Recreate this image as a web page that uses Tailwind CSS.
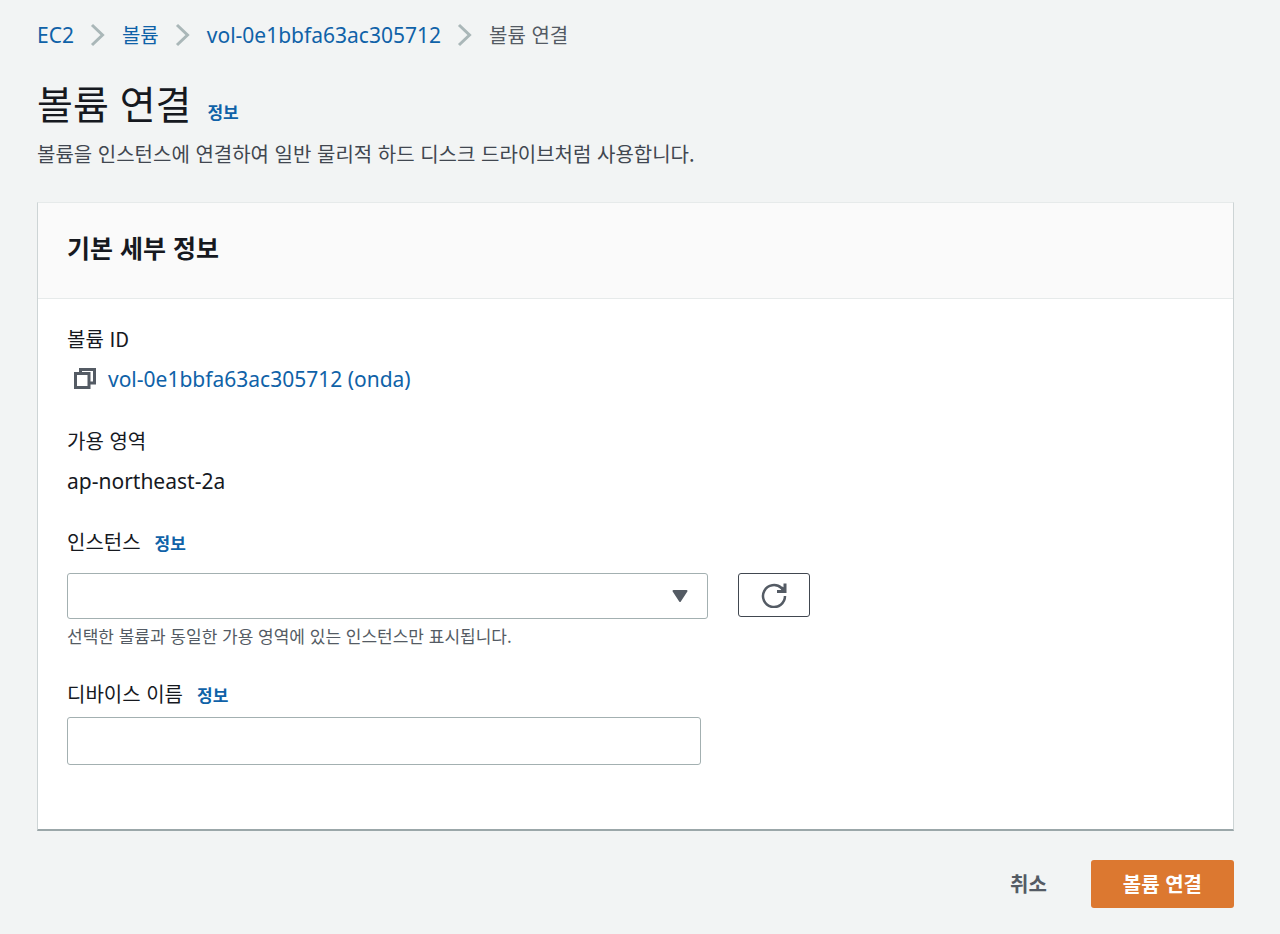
<!DOCTYPE html>
<html lang="ko">
<head>
<meta charset="utf-8">
<meta name="viewport" content="width=device-width, initial-scale=1">
<title>볼륨 연결</title>
<script src="https://cdn.jsdelivr.net/npm/@tailwindcss/browser@4"></script>
</head>
<body class="min-h-screen bg-[#f2f4f4] pt-5 pr-[46px] pb-6 pl-[37px] font-['Noto_Sans_CJK_KR',sans-serif] text-xl/[30px] text-[#16191f]">
  <nav aria-label="탐색 경로">
    <ol class="flex items-center text-[#0f62a8]">
      <li class="font-['Noto_Sans',sans-serif] text-[21px]/[30px]"><a href="#">EC2</a></li>
      <li aria-hidden="true" class="mx-4"><svg class="h-6 w-4" viewBox="0 0 16 24" fill="none" stroke="#aab7b8" stroke-width="3"><path d="M2 2l10.500 10L2 22"/></svg></li>
      <li><a href="#">볼륨</a></li>
      <li aria-hidden="true" class="mx-4"><svg class="h-6 w-4" viewBox="0 0 16 24" fill="none" stroke="#aab7b8" stroke-width="3"><path d="M2 2l10.500 10L2 22"/></svg></li>
      <li class="font-['Noto_Sans',sans-serif] text-[21px]/[30px]"><a href="#">vol-0e1bbfa63ac305712</a></li>
      <li aria-hidden="true" class="mx-4"><svg class="h-6 w-4" viewBox="0 0 16 24" fill="none" stroke="#aab7b8" stroke-width="3"><path d="M2 2l10.500 10L2 22"/></svg></li>
      <li aria-current="page" class="text-[#545b64]">볼륨 연결</li>
    </ol>
  </nav>

  <header class="mt-[22px]">
    <div class="flex items-baseline gap-4">
      <h1 class="text-[39px]/[60px]">볼륨 연결</h1>
      <a href="#" class="text-[17px]/[26px] font-bold text-[#0f62a8]">정보</a>
    </div>
    <p class="mt-[7px] text-[#414750]">볼륨을 인스턴스에 연결하여 일반 물리적 하드 디스크 드라이브처럼 사용합니다.</p>
  </header>

  <main>
    <form>
      <section class="mt-[33px] border-x border-t border-b-2 border-x-[#cdd4d5] border-t-[#e6eaea] border-b-[#9ba7a9] bg-white">
        <div class="border-b border-[#e6eaea] bg-[#fafafa] px-[29px] pt-[25px] pb-[31px]">
          <h2 class="text-[25px]/[39px] font-bold">기본 세부 정보</h2>
        </div>
        <div class="px-[29px] pt-[25px] pb-16">
          <dl>
            <dt>볼륨 ID</dt>
            <dd class="mt-[10px] flex items-center gap-3 pl-[7px] font-['Noto_Sans',sans-serif] text-[21px]/[30px]">
              <button type="button" aria-label="볼륨 ID 복사"><svg class="block h-[22px] w-[22px]" viewBox="0 0 22 22" fill="none" stroke="#545b64" stroke-width="3"><path d="M1.500 5.500h13.500v14H1.500zM6.500 5.500V1.500h14V15H15"/></svg></button>
              <a href="#" class="text-[#0f62a8]">vol-0e1bbfa63ac305712 (onda)</a>
            </dd>
            <dt class="mt-8">가용 영역</dt>
            <dd class="mt-[10px] font-['Noto_Sans',sans-serif] text-[21px]/[30px]">ap-northeast-2a</dd>
          </dl>

          <div class="mt-[31px] flex items-baseline gap-[14px]">
            <label for="instance">인스턴스</label>
            <a href="#" class="text-[17px]/[26px] font-bold text-[#0f62a8]">정보</a>
          </div>
          <div class="mt-4 flex items-start gap-[30px]">
            <div class="relative w-full max-w-[641px]">
              <select id="instance" aria-describedby="instance-hint" class="block h-[46px] w-full appearance-none rounded-[3px] border border-[#a3b0b1] bg-white px-4"><option value=""></option></select>
              <svg class="pointer-events-none absolute top-4 right-5 h-[14px] w-4" viewBox="0 0 16 14" fill="#545b64" stroke="#545b64" stroke-width="2" stroke-linejoin="round"><path d="M1.500 2h13L8 12z"/></svg>
            </div>
            <button type="button" aria-label="새로 고침" class="flex h-11 w-[72px] shrink-0 items-center justify-center rounded-[3px] border border-[#414750] bg-white">
              <svg class="h-[26px] w-[26px]" viewBox="0 0 26 26" fill="none" stroke="#545b64" stroke-width="2.500"><path d="M24 14A11 11 0 1 1 20.500 6L22 7.500"/><path d="M24 1.500v8h-8M20.500 5.500L24 9.500" stroke-width="3"/></svg>
            </button>
          </div>
          <p id="instance-hint" class="mt-1 text-[17px]/[26px] text-[#545b64]">선택한 볼륨과 동일한 가용 영역에 있는 인스턴스만 표시됩니다.</p>

          <div class="mt-[30px] flex items-baseline gap-[14px]">
            <label for="device">디바이스 이름</label>
            <a href="#" class="text-[17px]/[26px] font-bold text-[#0f62a8]">정보</a>
          </div>
          <input id="device" type="text" class="mt-2 block h-12 w-full max-w-[634px] rounded-[3px] border border-[#a3b0b1] bg-white px-4">
        </div>
      </section>

      <div class="mt-[29px] flex items-center justify-end gap-[14px]">
        <button type="button" class="h-12 px-[30px] font-bold text-[#545b64]">취소</button>
        <button type="submit" class="h-12 rounded-[3px] bg-[#dc7830] px-8 font-bold text-white">볼륨 연결</button>
      </div>
    </form>
  </main>
</body>
</html>
